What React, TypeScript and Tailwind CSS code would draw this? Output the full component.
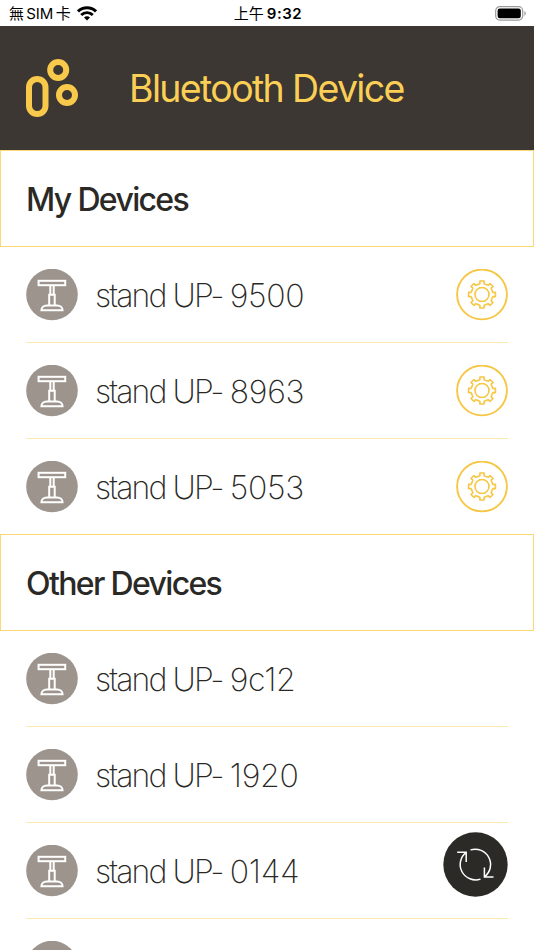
const myDevices = ["9500", "8963", "5053"];
const otherDevices = ["9c12", "1920", "0144"];

// outline of an eight-tooth cog, two rim points and two tip points per tooth
const cogPoints = Array.from({ length: 8 })
  .flatMap((_, i) =>
    [
      [-15, 10.9],
      [-10.5, 11.1],
      [-9, 13.6],
      [9, 13.6],
      [10.5, 11.1],
      [15, 10.9],
    ].map(([offset, radius]) => {
      const angle = ((i * 45 + offset) * Math.PI) / 180;
      return `${(radius * Math.sin(angle)).toFixed(2)},${(-radius * Math.cos(angle)).toFixed(2)}`;
    })
  )
  .join(" ");

function Logo() {
  return (
    <svg width="52" height="58" viewBox="0 0 52 58" fill="none" stroke="#f8c94b" strokeWidth="6">
      <rect x="3" y="20" width="16.5" height="35" rx="8.25" />
      <circle cx="32.2" cy="11" r="8" />
      <circle cx="41" cy="36" r="8" />
    </svg>
  );
}

function DeskIcon() {
  return (
    <svg width="52" height="52" viewBox="0 0 52 52" fill="none" stroke="#fff" strokeWidth="2" className="shrink-0">
      <circle cx="26" cy="25.5" r="25.8" fill="#9d958d" stroke="none" />
      <rect x="12.6" y="11.8" width="26.6" height="4.4" />
      <path d="M24.3 16.2v9.4M27.7 16.2v9.4" />
      <path d="M23.2 36.4V25.7h5.5v10.7" />
      <path d="M15.4 41.3c0-3 2.5-4.9 5.5-4.9h10.2c3 0 5.5 1.9 5.5 4.9z" />
    </svg>
  );
}

function SettingsButton() {
  return (
    <button aria-label="Settings" className="shrink-0">
      <svg width="52" height="52" viewBox="-26 -25.5 52 52" fill="none" stroke="#f6c644">
        <circle r="24.9" strokeWidth="1.9" />
        <polygon points={cogPoints} strokeWidth="1.6" strokeLinejoin="round" />
        <circle r="7" strokeWidth="1.6" />
      </svg>
    </button>
  );
}

function SectionTitle({ title }: { title: string }) {
  return (
    <h2 className="h-[97px] border border-[#fbd877] px-[25px] pt-0.5 flex items-center text-[32px] font-medium tracking-[-1.65px] text-[#2a2926]">
      {title}
    </h2>
  );
}

function DeviceRow({ id, settings }: { id?: string; settings?: boolean }) {
  return (
    <li className="h-24 flex items-center border-b border-[#fceab0] last:border-b-0 last:h-[95px]">
      <DeskIcon />
      {id && (
        <span className="ml-[17px] pt-0.5 flex-1 text-[32px] font-extralight tracking-[-1.9px] text-[#2a2926]">
          stand UP- <span className="tracking-[-0.3px]">{id}</span>
        </span>
      )}
      {settings && <SettingsButton />}
    </li>
  );
}

export default function App() {
  return (
    <div className="relative h-[950px] w-[534px] overflow-hidden bg-white font-['Inter','Noto_Sans_CJK_TC',sans-serif]">
      {/* Status bar */}
      <div className="h-[26px] grid grid-cols-3 items-center pl-[9px] pr-[7px] text-black">
        <div className="flex items-center gap-[7px] text-[15px] leading-none">
          <span className="whitespace-nowrap [word-spacing:-2px]">無 SIM 卡</span>
          <svg width="20" height="15" viewBox="0 0 20 15" fill="none" stroke="#000" strokeWidth="2.9" className="-ml-px">
            <path d="M1 5.4a12.8 12.8 0 0 1 18 0M4.2 9a8.2 8.2 0 0 1 11.6 0" />
            <path d="M10 14.6l-3-3a4.2 4.2 0 0 1 6 0z" fill="#000" stroke="none" />
          </svg>
        </div>
        <div className="text-center text-[15px] leading-none font-semibold whitespace-nowrap">
          <span className="font-normal">上午</span>
          <span className="ml-[3px] tracking-[0.5px]">9:32</span>
        </div>
        <div className="flex justify-end">
          <svg width="32" height="15" viewBox="0 0 32 15">
            <rect x="0.7" y="0.7" width="27" height="13.4" rx="4" fill="none" stroke="#9a9a9a" strokeWidth="1.2" />
            <rect x="2.6" y="2.6" width="23.2" height="9.6" rx="2.2" />
            <path d="M29.4 5v4.8c1.8-.7 1.8-4.1 0-4.8z" fill="#9a9a9a" />
          </svg>
        </div>
      </div>

      {/* Header */}
      <header className="h-[124px] flex items-center bg-[#3c3732] px-[26px]">
        <Logo />
        <h1 className="ml-[51px] pt-[3px] text-[37.5px] font-normal tracking-[-1.65px] text-[#fbcf55] whitespace-nowrap">
          Bluetooth Device
        </h1>
      </header>

      <SectionTitle title="My Devices" />
      <ul className="px-[26px]">
        {myDevices.map((id) => (
          <DeviceRow key={id} id={id} settings />
        ))}
      </ul>

      <SectionTitle title="Other Devices" />
      <ul className="px-[26px]">
        {otherDevices.map((id) => (
          <DeviceRow key={id} id={id} />
        ))}
        {/* next device, still waiting for its name */}
        <DeviceRow />
      </ul>

      {/* Floating rescan button */}
      <button aria-label="Rescan" className="absolute right-[26px] bottom-[53px]">
        <svg width="65" height="65" viewBox="-32.5 -32.5 65 65" fill="none" stroke="#fff" strokeWidth="1.5">
          <circle r="32.2" fill="#2b2a26" stroke="none" />
          <path d="M-18.3-12.2h9v9.7M5 14.6A15.4 15.4 0 0 1-9.3-12.2" />
          <path d="M18 12.4H8.9V3M-5-14.6A15.4 15.4 0 0 1 8.9 12.4" />
        </svg>
      </button>
    </div>
  );
}
